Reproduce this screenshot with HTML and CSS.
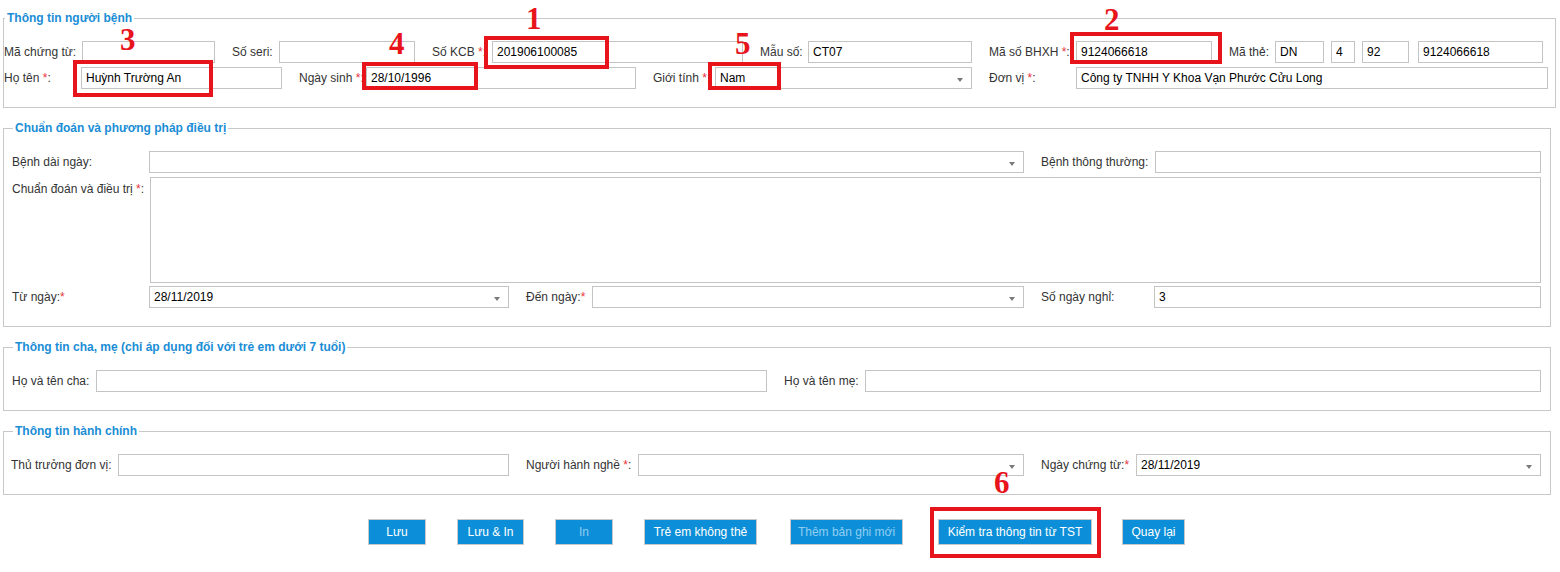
FILE: index.html
```html
<!DOCTYPE html>
<html lang="vi">
<head>
<meta charset="utf-8">
<title>Giấy chứng nhận nghỉ việc hưởng BHXH</title>
<link rel="stylesheet" href="styles.css">
</head>
<body>
<div class="page">
  <fieldset class="box box-first">
    <legend>Thông tin người bệnh</legend>
    <div class="row r1">
      <label class="lb">Mã chứng từ:</label>
      <input class="in" type="text" value="">
      <label class="lb gap">Số seri:</label>
      <input class="in" type="text" value="">
      <label class="lb gap">Số KCB <span class="req">*</span>:</label>
      <input class="in" type="text" value="201906100085">
      <label class="lb gap">Mẫu số:</label>
      <input class="in" type="text" value="CT07">
      <label class="lb gap">Mã số BHXH <span class="req">*</span>:</label>
      <input class="in" type="text" value="9124066618">
      <label class="lb gap">Mã thẻ:</label>
      <div class="card-code">
        <input class="in c-a" type="text" value="DN">
        <input class="in c-b" type="text" value="4">
        <input class="in c-c" type="text" value="92">
        <input class="in c-d" type="text" value="9124066618">
      </div>
    </div>
    <div class="row r2">
      <label class="lb">Họ tên <span class="req">*</span>:</label>
      <input class="in" type="text" value="Huỳnh Trường An">
      <label class="lb gap">Ngày sinh <span class="req">*</span>:</label>
      <input class="in" type="text" value="28/10/1996">
      <label class="lb gap">Giới tính <span class="req">*</span>:</label>
      <div class="sel">Nam</div>
      <label class="lb gap">Đơn vị <span class="req">*</span>:</label>
      <input class="in" type="text" value="Công ty TNHH Y Khoa Vạn Phước Cửu Long">
    </div>
  </fieldset>

  <fieldset class="box">
    <legend>Chuẩn đoán và phương pháp điều trị</legend>
    <div class="row r3">
      <label class="lb">Bệnh dài ngày:</label>
      <div class="sel"></div>
      <label class="lb gap">Bệnh thông thường:</label>
      <input class="in" type="text" value="">
    </div>
    <div class="row r4">
      <label class="lb">Chuẩn đoán và điều trị <span class="req">*</span>:</label>
      <textarea class="ta"></textarea>
    </div>
    <div class="row r5">
      <label class="lb">Từ ngày:<span class="req">*</span></label>
      <div class="sel">28/11/2019</div>
      <label class="lb gap">Đến ngày:<span class="req">*</span></label>
      <div class="sel"></div>
      <label class="lb gap">Số ngày nghỉ:</label>
      <input class="in" type="text" value="3">
    </div>
  </fieldset>

  <fieldset class="box">
    <legend>Thông tin cha, mẹ (chỉ áp dụng đối với trẻ em dưới 7 tuổi)</legend>
    <div class="row r6">
      <label class="lb">Họ và tên cha:</label>
      <input class="in" type="text" value="">
      <label class="lb gap">Họ và tên mẹ:</label>
      <input class="in" type="text" value="">
    </div>
  </fieldset>

  <fieldset class="box">
    <legend>Thông tin hành chính</legend>
    <div class="row r7">
      <label class="lb">Thủ trưởng đơn vị:</label>
      <input class="in" type="text" value="">
      <label class="lb gap">Người hành nghề <span class="req">*</span>:</label>
      <div class="sel"></div>
      <label class="lb gap">Ngày chứng từ:<span class="req">*</span></label>
      <div class="sel">28/11/2019</div>
    </div>
  </fieldset>

  <div class="actions">
    <button class="btn b-luu" type="button">Lưu</button>
    <button class="btn b-luuin" type="button">Lưu &amp; In</button>
    <button class="btn b-in" type="button" disabled>In</button>
    <button class="btn b-tre" type="button">Trẻ em không thẻ</button>
    <button class="btn b-them" type="button" disabled>Thêm bản ghi mới</button>
    <button class="btn b-kt" type="button">Kiểm tra thông tin từ TST</button>
    <button class="btn b-ql" type="button">Quay lại</button>
  </div>

  <div class="mark m1"></div>
  <div class="mark m2"></div>
  <div class="mark m3"></div>
  <div class="mark m4"></div>
  <div class="mark m5"></div>
  <div class="mark m6"></div>
  <span class="num n1">1</span>
  <span class="num n2">2</span>
  <span class="num n3">3</span>
  <span class="num n4">4</span>
  <span class="num n5">5</span>
  <span class="num n6">6</span>
</div>
</body>
</html>
```
FILE: styles.css
```css
* { box-sizing: border-box; }
html, body { margin: 0; padding: 0; background: #fff; }
body {
  font-family: "Liberation Sans", Arial, sans-serif;
  font-size: 12px;
  color: #333;
}
.page {
  position: relative;
  width: 1560px;
  height: 572px;
  overflow: hidden;
  padding-top: 1px;
}

/* fieldsets */
.box {
  border: 1px solid #c8c8c8;
  margin: 13px 9px 0 3px;
  padding: 16px 9px 18px 8px;
  min-width: 0;
}
.box-first {
  margin: 10px 4px 0 3px;
  padding: 16px 0 18px 0;
}
.box legend {
  font-weight: bold;
  font-size: 12px;
  line-height: 14px;
  color: #1a8dd6;
  padding: 0 2px;
  margin-left: 1px;
}
.box-first legend { margin-left: 1px; }

/* rows */
.row {
  display: grid;
  align-items: center;
  height: 22px;
}
.row + .row { margin-top: 4px; }
.r1 { grid-template-columns: 78px 133px 64px 136px 77px 251px 65px 164px 104px 136px 63px 268px; }
.r2 { grid-template-columns: 77px 201px 84px 270px 79px 257px 104px 472px; }
.r3 { grid-template-columns: 137px 875px 131px 386px; }
.r4 { grid-template-columns: 138px 1391px; height: 106px; align-items: start; }
.r5 { grid-template-columns: 137px 360px 83px 432px 130px 387px; }
.r6 { grid-template-columns: 84px 671px 98px 676px; }
.r7 { grid-template-columns: 106px 391px 129px 386px 112px 405px; }
.r4 + .r5 { margin-top: 3px; }
.r7 > .lb:first-child { margin-left: -1px; }

.lb {
  white-space: nowrap;
  color: #333;
  line-height: 14px;
}
.lb.gap { padding-left: 17px; }
.r4 .lb { padding-top: 5px; }
.req { color: #e8323c; }

.in, .sel, .ta {
  width: 100%;
  height: 22px;
  border: 1px solid #c4c4c4;
  background: #fff;
  font-family: "Liberation Sans", Arial, sans-serif;
  font-size: 12px;
  color: #000;
  margin: 0;
  border-radius: 0;
  outline: none;
}
.in { padding: 0 4px; }
.sel {
  position: relative;
  display: flex;
  align-items: center;
  padding: 0 20px 0 4px;
  white-space: nowrap;
}
.sel::after {
  content: "";
  position: absolute;
  right: 8px;
  top: 10px;
  border-left: 3px solid transparent;
  border-right: 3px solid transparent;
  border-top: 4px solid #7a7a7a;
}
.ta {
  height: 106px;
  resize: none;
  padding: 3px 4px;
  display: block;
}

.card-code { display: flex; }
.card-code .in { flex: none; }
.c-a { width: 49px !important; }
.c-b { width: 24px !important; margin-left: 7px; }
.c-c { width: 47px !important; margin-left: 7px; }
.c-d { width: 125px !important; margin-left: 9px; }

/* buttons */
.actions {
  display: flex;
  justify-content: center;
  width: 1553px;
  margin-top: 24px;
}
.btn {
  height: 26px;
  padding: 0;
  border: 1px solid #c9c9c9;
  background: #0c8fd8;
  color: #fff;
  font-family: "Liberation Sans", Arial, sans-serif;
  font-size: 12px;
  cursor: pointer;
  flex: none;
}
.btn:disabled { color: #92cdf1; cursor: default; }
.b-luu { width: 58px; }
.b-luuin { width: 67px; margin-left: 31px; }
.b-in { width: 58px; margin-left: 31px; }
.b-tre { width: 113px; margin-left: 31px; }
.b-them { width: 113px; margin-left: 33px; }
.b-kt { width: 154px; margin-left: 35px; }
.b-ql { width: 63px; margin-left: 30px; }

/* annotations overlay */
.mark {
  position: absolute;
  border: 4px solid #e8141c;
}
.m1 { left: 484px; top: 36px; width: 125px; height: 33px; }
.m2 { left: 1070px; top: 32px; width: 152px; height: 32px; }
.m3 { left: 73px; top: 60px; width: 140px; height: 37px; }
.m4 { left: 362px; top: 62px; width: 116px; height: 28px; }
.m5 { left: 708px; top: 62px; width: 73px; height: 28px; }
.m6 { left: 930px; top: 507px; width: 171px; height: 51px; }

.num {
  position: absolute;
  font-family: "Liberation Serif", "Times New Roman", serif;
  font-weight: bold;
  font-size: 31px;
  line-height: 31px;
  color: #e8141c;
}
.n1 { left: 526px; top: 3px; }
.n2 { left: 1104px; top: 4px; }
.n3 { left: 120px; top: 24px; }
.n4 { left: 389px; top: 28px; }
.n5 { left: 735px; top: 28px; }
.n6 { left: 994px; top: 467px; }
```
